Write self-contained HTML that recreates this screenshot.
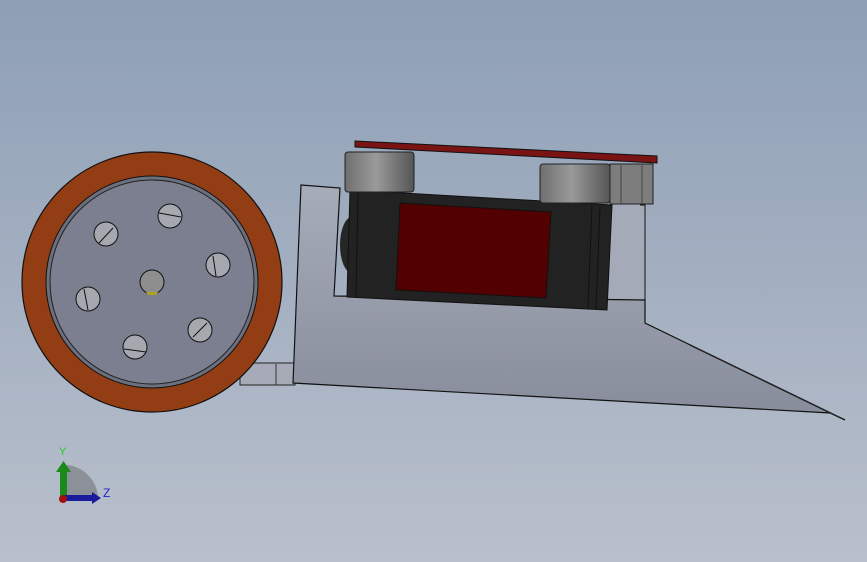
<!DOCTYPE html>
<html><head><style>
html,body{margin:0;padding:0;width:867px;height:562px;overflow:hidden}
body{background:linear-gradient(#8e9fb6,#b9c0cc)}
svg{position:absolute;left:0;top:0}
</style></head><body>
<svg width="867" height="562" viewBox="0 0 867 562">
<defs>
<linearGradient id="cyl" x1="0" x2="1"><stop offset="0" stop-color="#6f6f6f"/><stop offset=".45" stop-color="#9a9a9a"/><stop offset="1" stop-color="#555"/></linearGradient>
<linearGradient id="pl" x1="0" y1="0" x2="0" y2="1"><stop offset="0" stop-color="#a7acb9"/><stop offset="1" stop-color="#878c9b"/></linearGradient>
</defs>
<rect x="240" y="363" width="55" height="22" fill="#a6abb7" stroke="#222" stroke-width="1"/>
<line x1="276" y1="364" x2="276" y2="385" stroke="#333"/>
<path d="M610,205 L645,205 L645,323 L607,310 Z" fill="#a4aab8"/>
<path d="M301,185 L340,188 L334,296 L645,300 L645,323 L845,420 L830,413 L293,383 Z" fill="url(#pl)" stroke="#111" stroke-width="1.2"/>
<path d="M640,205 L645,205 L645,323" fill="none" stroke="#111"/>
<path d="M690,345 L845,420" stroke="#222" stroke-width="1.5"/>
<ellipse cx="352" cy="245" rx="12" ry="28" fill="#262626"/>
<path d="M350,190 L612,205 L607,310 L347,297 Z" fill="#222" stroke="#111"/>
<path d="M400,203 L551,212 L546,298 L396,290 Z" fill="#520000" stroke="#111"/>
<line x1="358" y1="192" x2="356" y2="297" stroke="#111"/>
<line x1="592" y1="205" x2="588" y2="308" stroke="#111"/>
<line x1="600" y1="206" x2="596" y2="309" stroke="#111"/>
<rect x="345" y="152" width="69" height="40" rx="3" fill="url(#cyl)" stroke="#222"/>
<rect x="540" y="164" width="70" height="39" rx="3" fill="url(#cyl)" stroke="#222"/>
<rect x="610" y="164" width="43" height="40" fill="#7d7d7d" stroke="#222"/>
<line x1="621" y1="165" x2="621" y2="204" stroke="#444"/>
<line x1="642" y1="165" x2="642" y2="204" stroke="#444"/>
<path d="M355,141 L657,156 L657,163 L355,147 Z" fill="#7a1414" stroke="#111"/>
<circle cx="152" cy="282" r="130" fill="#933d14" stroke="#111" stroke-width="1.2"/>
<circle cx="152" cy="282" r="106" fill="#6c707e" stroke="#111"/>
<circle cx="152" cy="282" r="102" fill="#7b7f8f" stroke="#222"/>
<g stroke="#111" stroke-width="1">
<circle cx="106" cy="234" r="12" fill="#a6a8b0"/>
<circle cx="170" cy="216" r="12" fill="#a6a8b0"/>
<circle cx="218" cy="265" r="12" fill="#a6a8b0"/>
<circle cx="88" cy="299" r="12" fill="#a6a8b0"/>
<circle cx="200" cy="330" r="12" fill="#a6a8b0"/>
<circle cx="135" cy="347" r="12" fill="#a6a8b0"/>
<circle cx="152" cy="282" r="12" fill="#8e8e8e"/>
</g>
<path d="M146,292 h12 l-2,3 h-8 z" fill="#b0a020"/>
<g stroke="#111" stroke-width="1">
<line x1="99" y1="243" x2="113" y2="228"/><line x1="159" y1="213" x2="181" y2="217"/>
<line x1="213" y1="256" x2="216" y2="276"/><line x1="84" y1="289" x2="88" y2="310"/>
<line x1="193" y1="337" x2="207" y2="323"/><line x1="124" y1="349" x2="146" y2="352"/>
</g>
<path d="M64,499 L64,465 A34,34 0 0 1 98,499 Z" fill="#8b9099"/>
<rect x="60" y="470" width="7" height="30" fill="#1a8a1a"/>
<path d="M56,472 L63.5,461 L71,472 Z" fill="#1a8a1a"/>
<rect x="63" y="495" width="30" height="6" fill="#1a1a9a"/>
<path d="M92,492 L101,498 L92,504 Z" fill="#1a1a9a"/>
<circle cx="63" cy="499" r="4" fill="#a01010"/>
<text x="59" y="455" font-family="Liberation Sans,sans-serif" font-size="11" fill="#2c2">Y</text>
<text x="103" y="497" font-family="Liberation Sans,sans-serif" font-size="12" fill="#22c">Z</text>
</svg>
</body></html>
